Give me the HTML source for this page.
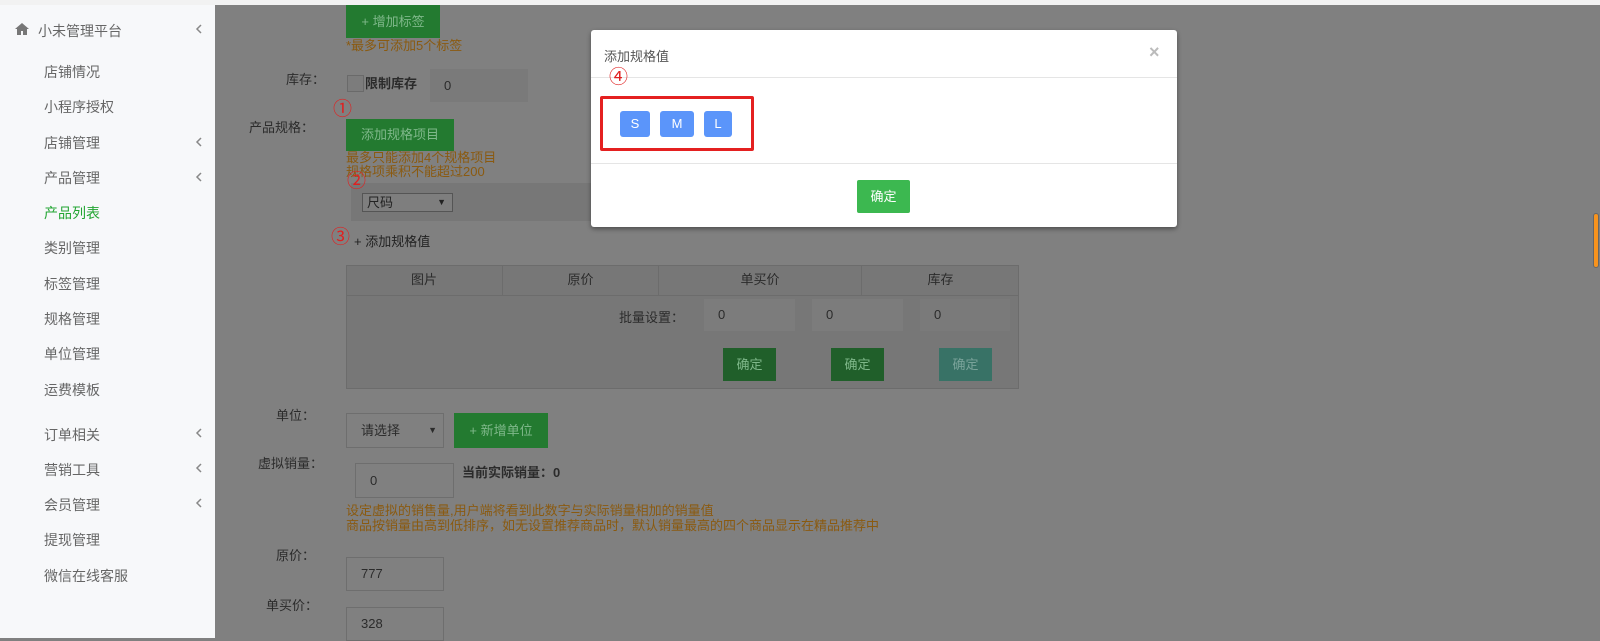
<!DOCTYPE html>
<html><head><meta charset="utf-8"><style>
*{margin:0;padding:0;box-sizing:border-box}
body{width:1600px;height:638px;overflow:hidden;background:#808080;font-family:"Liberation Sans","Noto Sans CJK SC",sans-serif;font-size:14px;position:relative}
.a{position:absolute;white-space:nowrap}
#top{left:0;top:0;width:1600px;height:5px;background:#f2f2f2}
#side{left:0;top:5px;width:215px;height:633px;background:#f7f8fa}
.nav{color:#666;font-size:14px;left:44px}
.chev{left:195px;width:8px;height:10px}
.lbl{color:#2b2b2b;font-size:13px}
.org{color:#8a5a10;font-size:13px;line-height:14px}
.btn{background:#237a30;color:#7fb88a;font-size:13px;text-align:center}
.inp{background:#7a7a7a;border:1px solid #6e6e6e;color:#2b2b2b;padding-left:14px;font-size:13px}
.red{color:#e02020;font-size:19px;line-height:20px}
</style></head><body>
<div class="a" id="top"></div>
<div class="a" id="side"></div>
<svg class="a" style="left:15px;top:23px" width="14" height="12" viewBox="0 0 14 12"><path d="M7 0L0 6h2v6h4V8h2v4h4V6h2z" fill="#777"/></svg>
<div class="a nav" style="left:38px;top:21px">小未管理平台</div>
<svg class="a chev" style="top:24px" viewBox="0 0 8 10"><path d="M6 1L2 5l4 4" stroke="#888" stroke-width="1.5" fill="none"/></svg>
<div class="a nav" style="top:62px">店铺情况</div>
<div class="a nav" style="top:97px">小程序授权</div>
<div class="a nav" style="top:133px">店铺管理</div><svg class="a chev" style="top:137px" viewBox="0 0 8 10"><path d="M6 1L2 5l4 4" stroke="#888" stroke-width="1.5" fill="none"/></svg>
<div class="a nav" style="top:168px">产品管理</div><svg class="a chev" style="top:172px" viewBox="0 0 8 10"><path d="M6 1L2 5l4 4" stroke="#888" stroke-width="1.5" fill="none"/></svg>
<div class="a nav" style="top:203px;color:#22a532">产品列表</div>
<div class="a nav" style="top:238px">类别管理</div>
<div class="a nav" style="top:274px">标签管理</div>
<div class="a nav" style="top:309px">规格管理</div>
<div class="a nav" style="top:344px">单位管理</div>
<div class="a nav" style="top:380px">运费模板</div>
<div class="a nav" style="top:425px">订单相关</div><svg class="a chev" style="top:428px" viewBox="0 0 8 10"><path d="M6 1L2 5l4 4" stroke="#888" stroke-width="1.5" fill="none"/></svg>
<div class="a nav" style="top:460px">营销工具</div><svg class="a chev" style="top:463px" viewBox="0 0 8 10"><path d="M6 1L2 5l4 4" stroke="#888" stroke-width="1.5" fill="none"/></svg>
<div class="a nav" style="top:495px">会员管理</div><svg class="a chev" style="top:498px" viewBox="0 0 8 10"><path d="M6 1L2 5l4 4" stroke="#888" stroke-width="1.5" fill="none"/></svg>
<div class="a nav" style="top:530px">提现管理</div>
<div class="a nav" style="top:566px">微信在线客服</div>

<div class="a btn" style="left:346px;top:5px;width:94px;height:33px;line-height:33px">+ 增加标签</div>
<div class="a org" style="left:346px;top:39px">*最多可添加5个标签</div>
<div class="a lbl" style="left:286px;top:69px">库存：</div>
<div class="a" style="left:347px;top:75px;width:17px;height:17px;border:1px solid #6a6a6a;background:#7c7c7c"></div>
<div class="a lbl" style="left:365px;top:73px;font-weight:bold">限制库存</div>
<div class="a inp" style="left:430px;top:69px;width:98px;height:33px;line-height:33px;border:none">0</div>
<div class="a red" style="left:333px;top:100px">①</div>
<div class="a lbl" style="left:249px;top:117px">产品规格：</div>
<div class="a btn" style="left:346px;top:119px;width:108px;height:32px;line-height:32px">添加规格项目</div>
<div class="a org" style="left:346px;top:151px">最多只能添加4个规格项目<br>规格项乘积不能超过200</div>
<div class="a" style="left:351px;top:183px;width:670px;height:38px;background:#777"></div>
<div class="a red" style="left:347px;top:172px">②</div>
<div class="a" style="left:362px;top:193px;width:91px;height:19px;border:1px solid #555;background:#7e7e7e;color:#222;font-size:13px;padding-left:4px;line-height:17px">尺码<span style="position:absolute;right:6px;font-size:9px">▼</span></div>
<div class="a red" style="left:331px;top:228px">③</div>
<div class="a lbl" style="left:354px;top:231px;color:#222">+ 添加规格值</div>

<div class="a" style="left:346px;top:265px;width:673px;height:124px;background:#777;border:1px solid #6c6c6c"></div>
<div class="a" style="left:346px;top:265px;width:673px;height:31px;border-bottom:1px solid #6c6c6c;display:flex;color:#2b2b2b;font-size:13px">
<div style="width:157px;text-align:center;line-height:30px;border-right:1px solid #6c6c6c">图片</div>
<div style="width:156px;text-align:center;line-height:30px;border-right:1px solid #6c6c6c">原价</div>
<div style="width:203px;text-align:center;line-height:30px;border-right:1px solid #6c6c6c">单买价</div>
<div style="flex:1;text-align:center;line-height:30px">库存</div></div>
<div class="a lbl" style="left:619px;top:307px">批量设置：</div>
<div class="a inp" style="left:704px;top:299px;width:91px;height:32px;line-height:32px;border:none;background:#7c7c7c">0</div>
<div class="a inp" style="left:812px;top:299px;width:91px;height:32px;line-height:32px;border:none;background:#7c7c7c">0</div>
<div class="a inp" style="left:920px;top:299px;width:90px;height:32px;line-height:32px;border:none;background:#7a7a7a">0</div>
<div class="a btn" style="left:723px;top:348px;width:53px;height:33px;line-height:33px;background:#205f2a">确定</div>
<div class="a btn" style="left:831px;top:348px;width:53px;height:33px;line-height:33px;background:#205f2a">确定</div>
<div class="a btn" style="left:939px;top:348px;width:53px;height:33px;line-height:33px;background:#387266;color:#7aa39a">确定</div>

<div class="a lbl" style="left:276px;top:405px">单位：</div>
<div class="a inp" style="left:346px;top:413px;width:98px;height:35px;line-height:33px;background:#808080">请选择<span style="position:absolute;right:6px;font-size:9px">▼</span></div>
<div class="a btn" style="left:454px;top:413px;height:35px;line-height:35px;width:94px">+ 新增单位</div>
<div class="a lbl" style="left:258px;top:453px">虚拟销量：</div>
<div class="a inp" style="left:355px;top:463px;width:99px;height:35px;line-height:33px;background:#808080">0</div>
<div class="a lbl" style="left:462px;top:462px;font-weight:bold">当前实际销量：0</div>
<div class="a org" style="left:346px;top:503px;line-height:15px">设定虚拟的销售量,用户端将看到此数字与实际销量相加的销量值<br>商品按销量由高到低排序，如无设置推荐商品时，默认销量最高的四个商品显示在精品推荐中</div>
<div class="a lbl" style="left:276px;top:545px">原价：</div>
<div class="a inp" style="left:346px;top:557px;width:98px;height:34px;line-height:32px;background:#808080">777</div>
<div class="a lbl" style="left:266px;top:595px">单买价：</div>
<div class="a inp" style="left:346px;top:607px;width:98px;height:34px;line-height:32px;background:#808080">328</div>

<div class="a" style="left:1593px;top:213px;width:6px;height:55px;background:#f7931e;border-radius:3px;border:1px solid #666"></div>

<div class="a" style="left:591px;top:30px;width:586px;height:197px;background:#fff;border-radius:3px;box-shadow:0 2px 5px rgba(0,0,0,.4)">
<div class="a" style="left:13px;top:16px;color:#555;font-size:13px">添加规格值</div>
<div class="a" style="left:558px;top:12px;color:#bbb;font-size:18px;font-weight:bold">×</div>
<div class="a" style="left:0;top:47px;width:586px;height:1px;background:#e5e5e5"></div>
<div class="a red" style="left:18px;top:38px">④</div>
<div class="a" style="left:9px;top:66px;width:154px;height:55px;border:3px solid #e42020;border-radius:2px"></div>
<div class="a" style="left:29px;top:81px;width:30px;height:26px;background:#5b95fa;border-radius:3px;color:#fff;text-align:center;line-height:26px;font-size:13px">S</div>
<div class="a" style="left:69px;top:81px;width:34px;height:26px;background:#5b95fa;border-radius:3px;color:#fff;text-align:center;line-height:26px;font-size:13px">M</div>
<div class="a" style="left:113px;top:81px;width:28px;height:26px;background:#5b95fa;border-radius:3px;color:#fff;text-align:center;line-height:26px;font-size:13px">L</div>
<div class="a" style="left:0;top:133px;width:586px;height:1px;background:#e5e5e5"></div>
<div class="a" style="left:266px;top:150px;width:53px;height:33px;background:#3cb850;border-radius:2px;color:#fff;text-align:center;line-height:33px;font-size:13px">确定</div>
</div>
</body></html>
